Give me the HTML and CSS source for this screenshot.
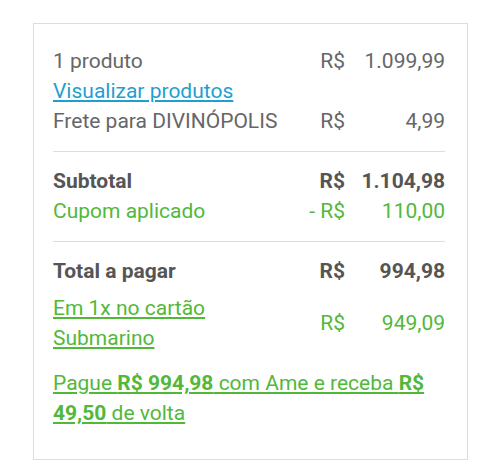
FILE: index.html
```html
<!DOCTYPE html>
<html>
  <head>
    <title>Resumo do pedido</title>
    <link rel="stylesheet" href="styles.css">
  </head>
  <body>
    <div class="summary">
      <div class="section">
        <div class="row">
          <span class="label">1 produto</span>
          <span class="currency">R$</span>
          <span class="value">1.099,99</span>
        </div>
        <div class="row">
          <a class="link" href="#">Visualizar produtos</a>
        </div>
        <div class="row">
          <span class="label">Frete para DIVINÓPOLIS</span>
          <span class="currency">R$</span>
          <span class="value">4,99</span>
        </div>
      </div>

      <div class="section">
        <div class="row strong">
          <span class="label">Subtotal</span>
          <span class="currency">R$</span>
          <span class="value">1.104,98</span>
        </div>
        <div class="row green">
          <span class="label">Cupom aplicado</span>
          <span class="currency">- R$</span>
          <span class="value">110,00</span>
        </div>
      </div>

      <div class="section last">
        <div class="row strong">
          <span class="label">Total a pagar</span>
          <span class="currency">R$</span>
          <span class="value">994,98</span>
        </div>
        <div class="row green card-row">
          <a class="label green-link" href="#">Em 1x no cartão<br>Submarino</a>
          <span class="currency">R$</span>
          <span class="value">949,09</span>
        </div>
        <p class="ame">
          <span>Pague </span><b>R$ 994,98</b><span> com Ame e receba </span><b>R$ 49,50</b><span> de volta</span>
        </p>
      </div>
    </div>
  </body>
</html>
```

FILE: styles.css
```css
body {
  margin: 0;
  background-color: #ffffff;
  font-family: Roboto, "Noto Sans", Arial, sans-serif;
  font-size: 21px;
  color: #666666;
}

.summary {
  width: 392px;
  margin: 23px 0 0 33px;
  padding: 0 22px 0 19px;
  border: 1px solid #dddddd;
}

.section {
  padding: 22px 0 15px;
  border-bottom: 1px solid #dddddd;
}

.section + .section {
  padding-top: 14px;
}

.section.last {
  border-bottom: none;
  padding-bottom: 31px;
}

.row {
  display: grid;
  grid-template-columns: 1fr auto 100px;
  align-items: center;
  line-height: 30px;
}

.currency,
.value {
  text-align: right;
}

.strong {
  font-weight: bold;
  color: #555555;
}

.green {
  color: #52b83a;
}

.link {
  color: #1f9fcf;
  text-decoration: underline;
}

.green-link {
  color: #52b83a;
  text-decoration: underline;
}

.card-row {
  margin-top: 7px;
}

.ame {
  margin: 15px 0 0;
  line-height: 30px;
  color: #52b83a;
  text-decoration: underline;
  cursor: pointer;
}
```
